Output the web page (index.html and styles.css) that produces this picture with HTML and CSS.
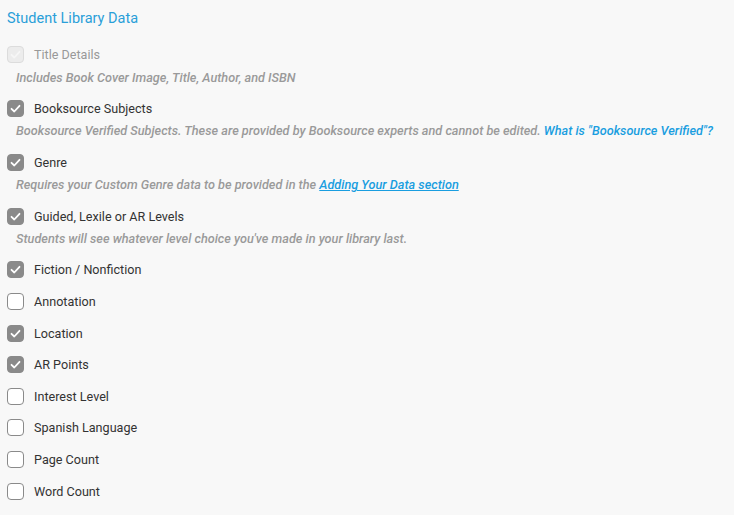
FILE: index.html
```html
<!DOCTYPE html>
<html lang="en">
<head>
<meta charset="utf-8">
<title>Student Library Data</title>
<link rel="stylesheet" href="styles.css">
</head>
<body>
<section class="panel">
  <h2 class="panel-title">Student Library Data</h2>
  <ul class="options">
    <li class="option">
      <label class="row disabled"><span class="box checked faint"><svg viewBox="0 0 17 17"><path d="M4.5 8.8 L7.3 11.5 L12.5 5.8"/></svg></span><span class="label">Title Details</span></label>
      <p class="desc">Includes Book Cover Image, Title, Author, and ISBN</p>
    </li>
    <li class="option">
      <label class="row"><span class="box checked"><svg viewBox="0 0 17 17"><path d="M4.5 8.8 L7.3 11.5 L12.5 5.8"/></svg></span><span class="label">Booksource Subjects</span></label>
      <p class="desc">Booksource Verified Subjects. These are provided by Booksource experts and cannot be edited. <a class="link">What is "Booksource Verified"?</a></p>
    </li>
    <li class="option">
      <label class="row"><span class="box checked"><svg viewBox="0 0 17 17"><path d="M4.5 8.8 L7.3 11.5 L12.5 5.8"/></svg></span><span class="label">Genre</span></label>
      <p class="desc">Requires your Custom Genre data to be provided in the <a class="link underline">Adding Your Data section</a></p>
    </li>
    <li class="option">
      <label class="row"><span class="box checked"><svg viewBox="0 0 17 17"><path d="M4.5 8.8 L7.3 11.5 L12.5 5.8"/></svg></span><span class="label">Guided, Lexile or AR Levels</span></label>
      <p class="desc">Students will see whatever level choice you've made in your library last.</p>
    </li>
    <li class="option">
      <label class="row"><span class="box checked"><svg viewBox="0 0 17 17"><path d="M4.5 8.8 L7.3 11.5 L12.5 5.8"/></svg></span><span class="label">Fiction / Nonfiction</span></label>
    </li>
    <li class="option">
      <label class="row"><span class="box"></span><span class="label">Annotation</span></label>
    </li>
    <li class="option">
      <label class="row"><span class="box checked"><svg viewBox="0 0 17 17"><path d="M4.5 8.8 L7.3 11.5 L12.5 5.8"/></svg></span><span class="label">Location</span></label>
    </li>
    <li class="option">
      <label class="row"><span class="box checked"><svg viewBox="0 0 17 17"><path d="M4.5 8.8 L7.3 11.5 L12.5 5.8"/></svg></span><span class="label">AR Points</span></label>
    </li>
    <li class="option">
      <label class="row"><span class="box"></span><span class="label">Interest Level</span></label>
    </li>
    <li class="option">
      <label class="row"><span class="box"></span><span class="label">Spanish Language</span></label>
    </li>
    <li class="option">
      <label class="row"><span class="box"></span><span class="label">Page Count</span></label>
    </li>
    <li class="option">
      <label class="row"><span class="box"></span><span class="label">Word Count</span></label>
    </li>
  </ul>
</section>
</body>
</html>
```

FILE: styles.css
```css
html, body {
  margin: 0;
  padding: 0;
  background: #f8f8f8;
}
body {
  font-family: Roboto, "Liberation Sans", Arial, sans-serif;
  color: #333;
}
.panel {
  padding: 9px 0 0 7px;
}
.panel-title {
  margin: 0;
  font-size: 14.5px;
  font-weight: 400;
  line-height: 20px;
  color: #2a9fd8;
}
.options {
  list-style: none;
  margin: 10px 0 0;
  padding: 0;
}
.row {
  display: flex;
  align-items: center;
  gap: 10px;
  height: 31.6px;
}
.box {
  width: 17px;
  height: 17px;
  box-sizing: border-box;
  border: 1.5px solid #8a8a8a;
  border-radius: 4px;
  background: #fff;
  display: flex;
  align-items: center;
  justify-content: center;
  flex: none;
}
.box.checked {
  background: #8a8a8a;
  border-color: #8a8a8a;
}
.box svg {
  width: 17px;
  height: 17px;
  flex: none;
}
.box svg path {
  fill: none;
  stroke: #fff;
  stroke-width: 1.8;
  stroke-linecap: round;
  stroke-linejoin: round;
}
.box.faint {
  background: #ececec;
  border-color: #dcdcdc;
}
.box.faint svg path {
  stroke: #f6f6f6;
}
.label {
  font-size: 12.6px;
  color: #333;
}
.disabled .label {
  color: #999;
}
.desc {
  margin: 0 0 7.7px 9px;
  font-size: 12.7px;
  line-height: 14.5px;
  font-style: italic;
  font-weight: 500;
  color: #9a9a9a;
}
.link {
  color: #1a9ee0;
}
.underline {
  text-decoration: underline;
}
```
